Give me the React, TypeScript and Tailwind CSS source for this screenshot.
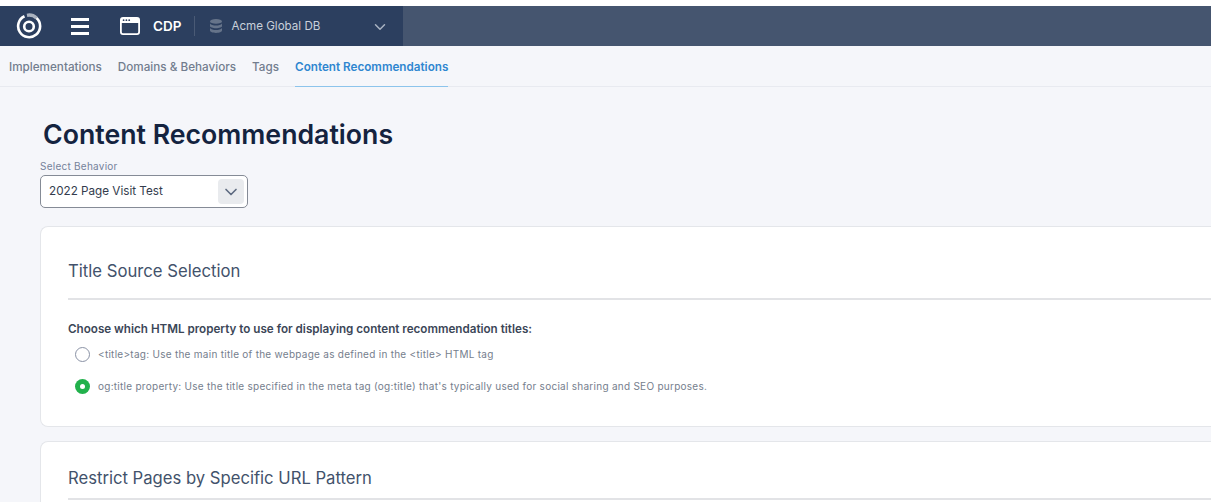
import { ChevronDown } from 'lucide-react';

const tabs = ['Implementations', 'Domains & Behaviors', 'Tags'];

const Logo = () => (
  <svg width="26" height="26" viewBox="0 0 26 26" fill="none" stroke="white">
    <path d="M8.500 3.200A11 11 0 1 0 20.500 5" strokeWidth="2.600" />
    <path d="M11 2.300A11 11 0 0 1 20.500 5" strokeWidth="3.400" strokeOpacity="0.6" />
    <circle cx="13" cy="13.500" r="4.800" strokeWidth="2.600" />
  </svg>
);

const BrowserIcon = () => (
  <svg width="20" height="18" viewBox="0 0 20 18">
    <path
      fill="white"
      fillRule="evenodd"
      d="M3 0h14a3 3 0 0 1 3 3v12a3 3 0 0 1-3 3H3a3 3 0 0 1-3-3V3a3 3 0 0 1 3-3ZM1.800 6v9A1.200 1.200 0 0 0 3 16.200h14a1.200 1.200 0 0 0 1.200-1.200V6Z"
    />
    <circle cx="3.600" cy="3.200" r="0.900" fill="#2c3f5f" />
    <circle cx="6.400" cy="3.200" r="0.900" fill="#2c3f5f" />
    <circle cx="9.200" cy="3.200" r="0.900" fill="#2c3f5f" />
  </svg>
);

const DbIcon = () => (
  <svg width="12" height="14" viewBox="0 0 12 14" fill="#66748a">
    <ellipse cx="6" cy="2.400" rx="6" ry="2.400" />
    <path d="M0 4.400c1 1.400 3.400 2 6 2s5-.6 6-2v2.600c0 1.300-2.700 2.200-6 2.200S0 8.300 0 7Z" />
    <path d="M0 9c1 1.400 3.400 2 6 2s5-.6 6-2v2.600C12 12.900 9.300 14 6 14s-6-1.100-6-2.400Z" />
  </svg>
);

const App = () => {
  return (
    <div className="h-[502px] overflow-hidden bg-[#f5f6fa] font-['Inter',sans-serif]">
      <div className="h-[6px] bg-white" />

      <div className="flex h-[40px] bg-[#45556f]">
        <div className="flex w-[403px] items-center bg-[#2c3f5f]">
          <div className="ml-[16px] flex w-[26px] items-center">
            <Logo />
          </div>
          <div className="ml-[29px] flex w-[18px] flex-col gap-[4px]">
            <div className="h-[3px] bg-white" />
            <div className="h-[3px] bg-white" />
            <div className="h-[3px] bg-white" />
          </div>
          <div className="ml-[31px]">
            <BrowserIcon />
          </div>
          <span className="ml-[13px] text-[13.500px] font-semibold text-white">CDP</span>
          <div className="ml-[13px] h-[20px] w-px bg-[#4a5a75]" />
          <div className="ml-[15px]">
            <DbIcon />
          </div>
          <span className="mt-px ml-[9px] text-[11.600px] text-[#c9d0da]">Acme Global DB</span>
          <ChevronDown className="mt-[2px] ml-[51px] text-[#a9b3c2]" size={18} strokeWidth={2} />
        </div>
      </div>

      <div className="flex h-[41px] gap-4 border-b border-[#e8eaf0] pl-[9px]">
        {tabs.map((tab) => (
          <div key={tab} className="pt-[13px] text-[11.700px] font-medium text-[#727d8e]">
            {tab}
          </div>
        ))}
        <div className="h-[41px] border-b border-[#8cc4ec] pt-[13px] text-[11.700px] font-semibold text-[#2f86d0]">
          Content Recommendations
        </div>
      </div>

      <div className="pl-[40px]">
        <h1 className="mt-[31px] ml-[3px] text-[26.700px] leading-[32px] font-semibold text-[#14233f]">
          Content Recommendations
        </h1>
        <div className="mt-[10px] text-[10px] leading-[12px] tracking-[0.25px] text-[#76829a]">
          Select Behavior
        </div>
        <div className="mt-[3px] flex h-[33px] w-[208px] items-center justify-between rounded-[5px] border border-[#858b96] bg-white pr-[3px] pl-[8px]">
          <span className="text-[11.700px] text-[#333c4d]">2022 Page Visit Test</span>
          <div className="flex h-[25px] w-[26px] items-center justify-center rounded-[4px] bg-[#e9ebee]">
            <ChevronDown className="text-[#5d6a80]" size={20} strokeWidth={2} />
          </div>
        </div>

        <div className="mt-[18px] h-[201px] rounded-l-[8px] border-y border-l border-[#e4e6ea] bg-white pl-[27px]">
          <h2 className="pt-[33px] text-[16.700px] leading-[22px] text-[#42526b]">Title Source Selection</h2>
          <div className="mt-[16px] h-[2px] bg-[#e2e3e6]" />
          <p className="mt-[21px] text-[11.650px] leading-[16px] font-semibold text-[#3b4657]">
            Choose which HTML property to use for displaying content recommendation titles:
          </p>
          <div className="mt-[9px] flex h-[16px] items-center pl-[7px]">
            <div className="h-[15px] w-[15px] rounded-full border border-[#8a92a5] bg-white" />
            <span className="ml-[8px] text-[10px] tracking-[0.27px] text-[#757e8d]">
              {'<title>tag: Use the main title of the webpage as defined in the <title> HTML tag'}
            </span>
          </div>
          <div className="mt-[16px] flex h-[16px] items-center pl-[7px]">
            <div className="flex h-[15px] w-[15px] items-center justify-center rounded-full bg-[#22b14c]">
              <div className="h-[5px] w-[5px] rounded-full bg-white" />
            </div>
            <span className="ml-[8px] text-[10px] tracking-[0.27px] text-[#757e8d]">
              og:title property: Use the title specified in the meta tag (og:title) that's typically used for social sharing and SEO purposes.
            </span>
          </div>
        </div>

        <div className="mt-[14px] h-[80px] rounded-l-[8px] border-y border-l border-[#e4e6ea] bg-white pl-[27px]">
          <h2 className="pt-[25px] text-[16.650px] leading-[22px] text-[#42526b]">
            Restrict Pages by Specific URL Pattern
          </h2>
          <div className="mt-[9px] h-[2px] bg-[#e2e3e6]" />
        </div>
      </div>
    </div>
  );
};

export default App;
